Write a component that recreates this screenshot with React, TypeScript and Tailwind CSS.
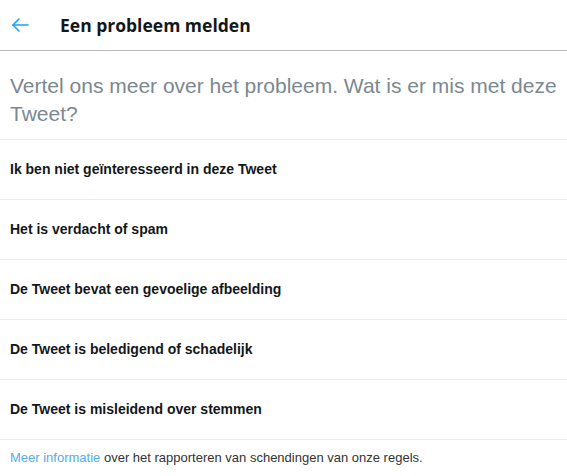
import React from 'react';

const reasons = [
  'Ik ben niet geïnteresseerd in deze Tweet',
  'Het is verdacht of spam',
  'De Tweet bevat een gevoelige afbeelding',
  'De Tweet is beledigend of schadelijk',
  'De Tweet is misleidend over stemmen',
];

export default function App() {
  return (
    <div className="w-[567px] h-[476px] bg-white font-['Liberation_Sans',Arial,sans-serif]">
      {/* Header */}
      <div className="h-[51px] flex items-center border-b border-[#b8b8b8]">
        <button className="w-[60px] h-full flex items-center pl-[11px] text-[#1da1f2]" aria-label="Terug">
          <svg width="18" height="16" viewBox="0 0 18 16" fill="none" stroke="currentColor" strokeWidth="1.6" strokeLinecap="round" strokeLinejoin="round">
            <path d="M17 8H2" />
            <path d="M8 2L2 8l6 6" />
          </svg>
        </button>
        <h1 className="font-['Open_Sans',sans-serif] font-bold text-[17.5px] text-[#14171a]">Een probleem melden</h1>
      </div>

      {/* Question */}
      <div className="px-[10px] pt-[21px] pb-[11px] border-b border-[#e6ecf0]">
        <p className="text-[21px] leading-[28px] text-[#7b8891]">
          Vertel ons meer over het probleem. Wat is er mis met deze Tweet?
        </p>
      </div>

      {/* Options */}
      <ul>
        {reasons.map((r) => (
          <li key={r} className="h-[60px] flex items-center px-[10px] border-b border-[#e6ecf0] text-[14px] font-bold text-[#14171a] cursor-pointer">
            {r}
          </li>
        ))}
      </ul>

      {/* Footer */}
      <p className="px-[10px] pt-[8px] text-[13px] text-[#333]">
        <a className="text-[#55acee]">Meer informatie</a> over het rapporteren van schendingen van onze regels.
      </p>
    </div>
  );
}
